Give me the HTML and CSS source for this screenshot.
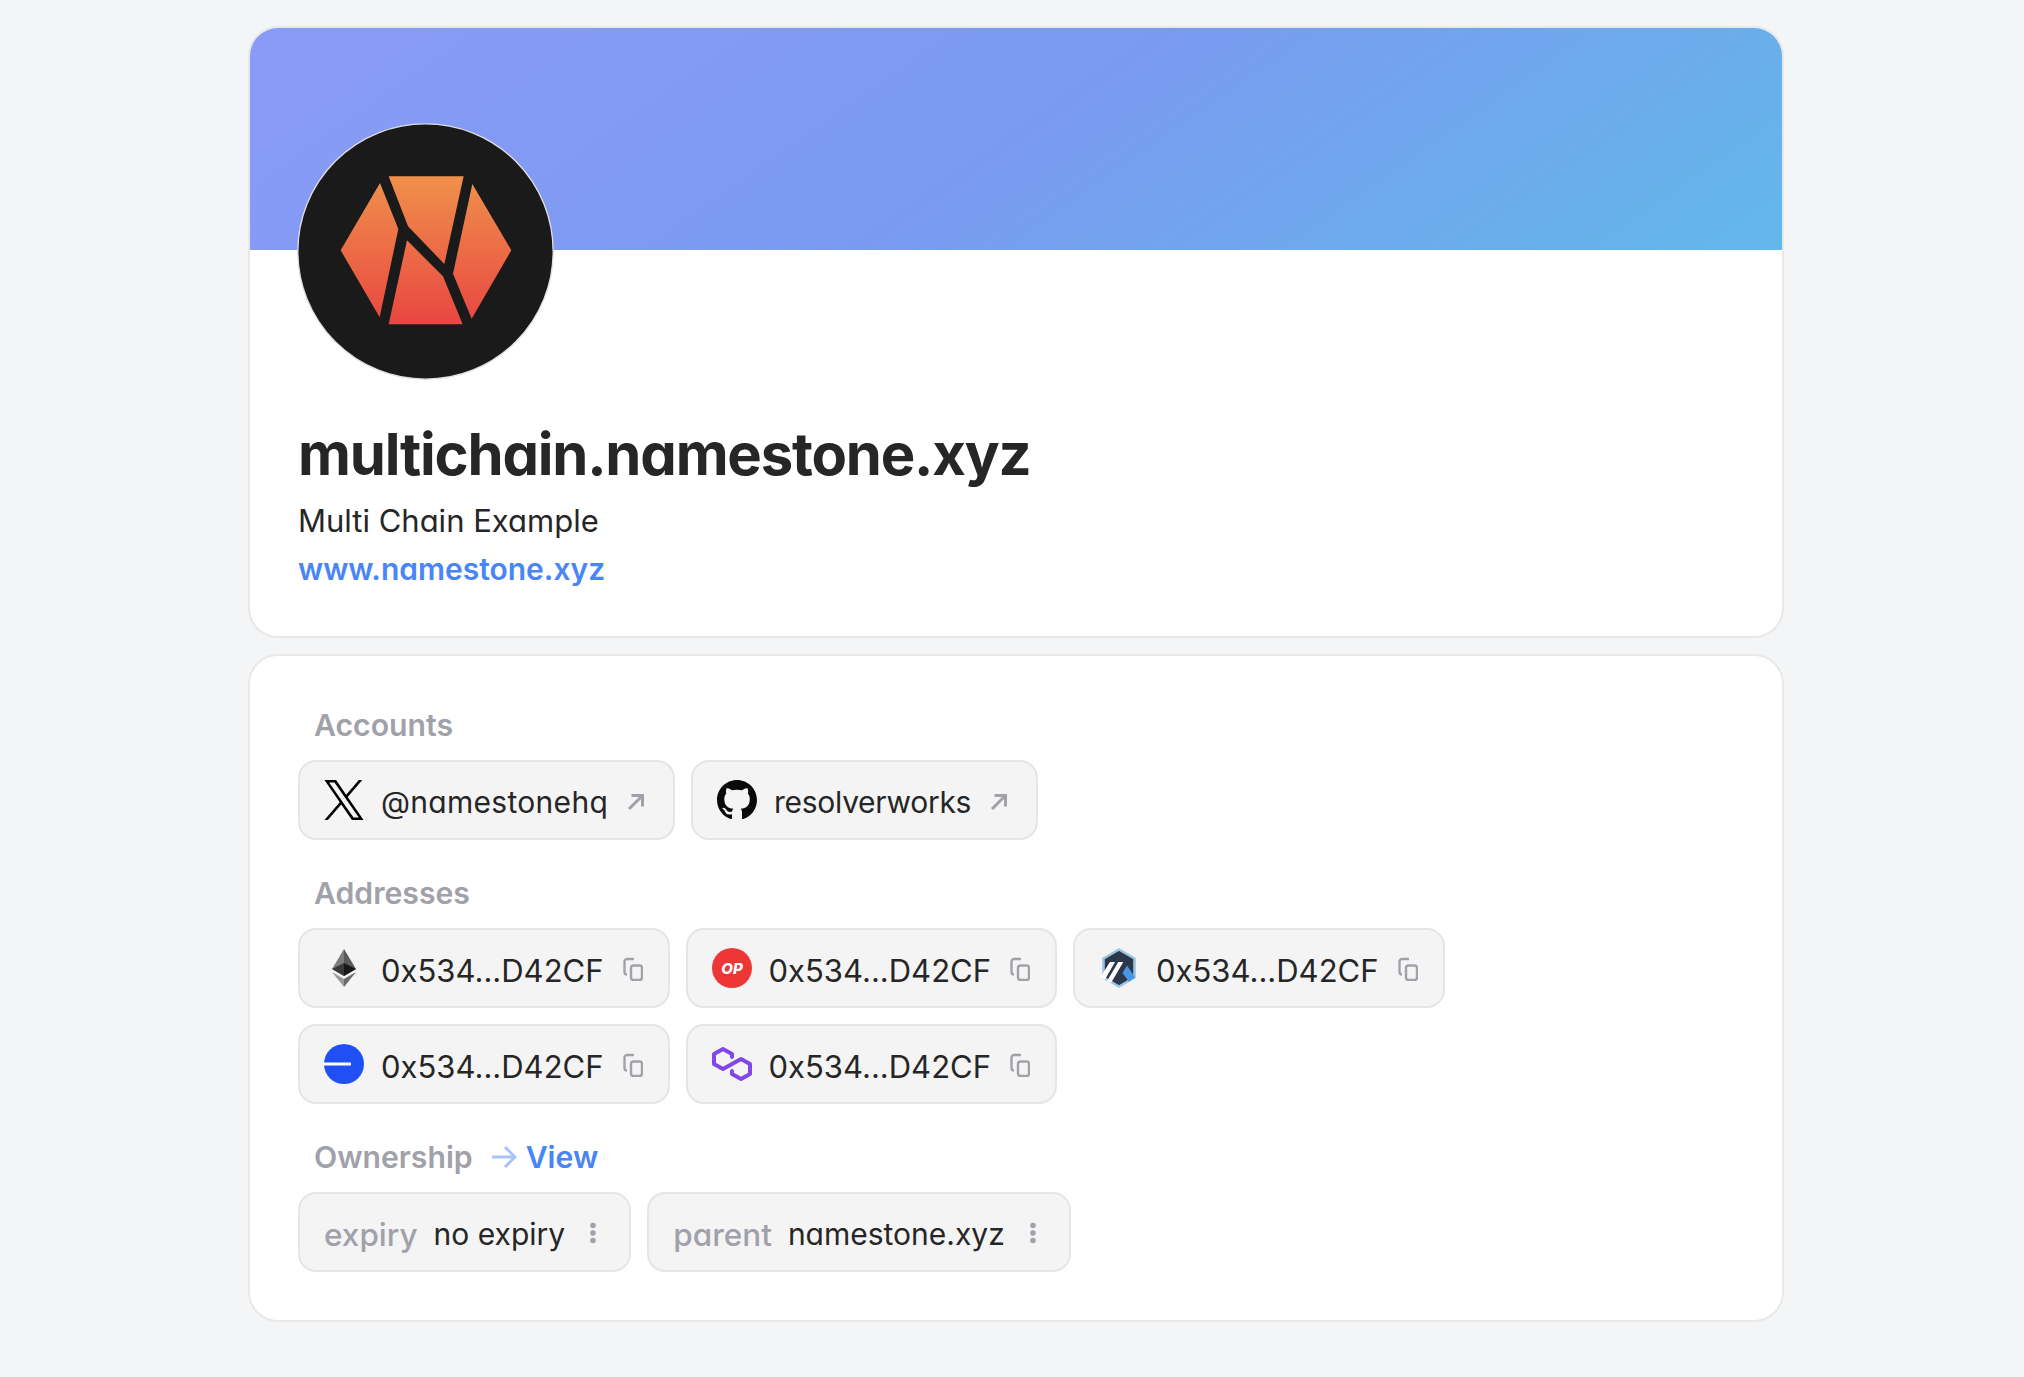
FILE: index.html
```html
<!DOCTYPE html>
<html lang="en">
  <head>
    <meta charset="UTF-8" />
    <title>multichain.namestone.xyz</title>
    <link rel="stylesheet" href="styles.css">
  </head>
  <body>
    <svg class="defs" width="0" height="0">
      <symbol id="copy" viewBox="0 0 20 24">
        <path d="M11 2H4a2.500 2.500 0 0 0-2.500 2.500V15A2.500 2.500 0 0 0 4 17.500" fill="none" stroke="currentColor" stroke-width="2.400"/>
        <rect x="8" y="8.500" width="11" height="14.500" rx="2.500" fill="none" stroke="currentColor" stroke-width="2.400"/>
      </symbol>
      <symbol id="out" viewBox="0 0 18 18">
        <path d="M2 16 15.500 2.500M4.500 2.500h11v11" fill="none" stroke="currentColor" stroke-width="3"/>
      </symbol>
      <symbol id="more" viewBox="0 0 8 22">
        <circle cx="4" cy="3.500" r="2.800" fill="currentColor"/>
        <circle cx="4" cy="11" r="2.800" fill="currentColor"/>
        <circle cx="4" cy="18.500" r="2.800" fill="currentColor"/>
      </symbol>
    </svg>

    <main class="page">
      <section class="card">
        <div class="banner"></div>
        <div class="profile">
          <svg class="avatar" viewBox="172 310 771 771">
            <defs>
              <linearGradient id="logo" gradientUnits="userSpaceOnUse" x1="0" y1="470" x2="0" y2="914">
                <stop offset="0" stop-color="#ef914b"/>
                <stop offset="1" stop-color="#e94641"/>
              </linearGradient>
            </defs>
            <circle cx="557.500" cy="695.500" r="383" fill="#1a1a1a" stroke="#dfdfdf" stroke-width="4"/>
            <path fill="url(#logo)" d="M447 470H672L614 733 505 620ZM421 490 476 628 420 893 303 692ZM698 493 815 692 696 897 640 762ZM502 662 610 770 669 914H447Z"/>
          </svg>
          <h1 class="name">multichain.namestone.xyz</h1>
          <p class="desc">Multi Chain Example</p>
          <a class="site" href="#">www.namestone.xyz</a>
        </div>
      </section>

      <section class="card details">
        <h2 class="label">Accounts</h2>
        <div class="chips">
          <div class="chip">
            <svg class="icon" viewBox="0 0 1200 1227"><path fill="#000" d="M714.163 519.284L1160.89 0H1055.03L667.137 450.887L357.328 0H0L468.492 681.821L0 1226.37H105.866L515.491 750.218L842.672 1226.37H1200L714.137 519.284H714.163ZM569.165 687.828L521.697 619.934L144.011 79.6944H306.615L611.412 515.685L658.88 583.579L1055.08 1150.3H892.476L569.165 687.854V687.828Z"/></svg>
            <span class="val wide">@namestonehq</span>
            <svg class="end out"><use href="#out"/></svg>
          </div>
          <div class="chip">
            <svg class="icon" viewBox="0 0 16 16"><path fill="#0a0a0a" d="M8 0C3.58 0 0 3.58 0 8c0 3.54 2.29 6.53 5.47 7.59.4.07.55-.17.55-.38 0-.19-.01-.82-.01-1.49-2.01.37-2.53-.49-2.69-.94-.09-.23-.48-.94-.82-1.13-.28-.15-.68-.52-.01-.53.63-.01 1.08.58 1.23.82.72 1.21 1.87.87 2.33.66.07-.52.28-.87.51-1.07-1.78-.2-3.64-.89-3.64-3.95 0-.87.31-1.59.82-2.15-.08-.2-.36-1.02.08-2.12 0 0 .67-.21 2.2.82.64-.18 1.32-.27 2-.27.68 0 1.36.09 2 .27 1.53-1.04 2.2-.82 2.2-.82.44 1.1.16 1.92.08 2.12.51.56.82 1.27.82 2.15 0 3.07-1.87 3.75-3.65 3.95.29.25.54.73.54 1.48 0 1.07-.01 1.93-.01 2.2 0 .21.15.46.55.38A8.013 8.013 0 0016 8c0-4.42-3.58-8-8-8z"/></svg>
            <span class="val tight">resolverworks</span>
            <svg class="end out"><use href="#out"/></svg>
          </div>
        </div>

        <h2 class="label">Addresses</h2>
        <div class="chips">
          <div class="chip addr">
            <svg class="icon" viewBox="0 0 40 40">
              <path fill="#7d7d7d" d="M20 1 8 21l12 7z"/>
              <path fill="#5a5a5a" d="M20 1l12 20-12 7z"/>
              <path fill="#3a3a3a" d="M8 21l12-6v13z"/>
              <path fill="#191919" d="M32 21l-12-6v13z"/>
              <path fill="#9a9a9a" d="M8 24l12 15v-8z"/>
              <path fill="#6a6a6a" d="M32 24 20 39v-8z"/>
            </svg>
            <span class="val">0x534...D42CF</span>
            <svg class="end copy"><use href="#copy"/></svg>
          </div>
          <div class="chip addr">
            <svg class="icon" viewBox="0 0 40 40">
              <circle cx="20" cy="20" r="20" fill="#ef3636"/>
              <text class="op" x="20" y="25.500" text-anchor="middle">OP</text>
            </svg>
            <span class="val">0x534...D42CF</span>
            <svg class="end copy"><use href="#copy"/></svg>
          </div>
          <div class="chip addr">
            <svg class="icon" viewBox="0 0 40 40">
              <path fill="#2d374b" stroke="#9dc3df" stroke-width="2.600" stroke-linejoin="round" d="M20 1.500 35.500 10.500V29.500L20 38.500 4.500 29.500V10.500Z"/>
              <path fill="#4a96e6" d="M23.500 25 28 17.500 36 29.300 30 33.800Z"/>
              <path fill="#fff" d="M1.500 29 6 31.500 16 14H11ZM8 33 12 35 24.300 14H19.300Z"/>
            </svg>
            <span class="val">0x534...D42CF</span>
            <svg class="end copy"><use href="#copy"/></svg>
          </div>
          <div class="chip addr">
            <svg class="icon" viewBox="0 0 40 40">
              <circle cx="20" cy="20" r="20" fill="#1f50f5"/>
              <rect x="0" y="18.500" width="27" height="3" fill="#fff"/>
            </svg>
            <span class="val">0x534...D42CF</span>
            <svg class="end copy"><use href="#copy"/></svg>
          </div>
          <div class="chip addr">
            <svg class="icon" viewBox="0 0 40 36">
              <path fill="none" stroke="#8247e5" stroke-width="4" stroke-linejoin="round" stroke-linecap="round" d="M20 11V8L11 3 2 8V18L11 23 29 13 38 18V28L29 33 20 28V25"/>
            </svg>
            <span class="val">0x534...D42CF</span>
            <svg class="end copy"><use href="#copy"/></svg>
          </div>
        </div>

        <h2 class="label">
          Ownership
          <svg class="arrow" viewBox="0 0 26 24"><path d="M1 12h23M14 2l10 10-10 10" fill="none" stroke="#a6c4fb" stroke-width="3"/></svg>
          <a class="view" href="#">View</a>
        </h2>
        <div class="chips">
          <div class="chip">
            <span class="key">expiry</span>
            <span class="val">no expiry</span>
            <svg class="end more"><use href="#more"/></svg>
          </div>
          <div class="chip">
            <span class="key">parent</span>
            <span class="val">namestone.xyz</span>
            <svg class="end more"><use href="#more"/></svg>
          </div>
        </div>
      </section>
    </main>
  </body>
</html>
```

FILE: styles.css
```css
* {
  box-sizing: border-box;
}
body {
  margin: 0;
  background: #f4f5f6;
  font-family: Inter, "Noto Sans", sans-serif;
  font-feature-settings: "cv11";
  color: #262626;
}
.defs {
  display: block;
  height: 0;
}
.page {
  width: 1536px;
  margin: 26px 0 0 248px;
  display: flex;
  flex-direction: column;
  gap: 16px;
}
.card {
  background: #fff;
  border: 2px solid #e8e8e8;
  border-radius: 30px;
  overflow: hidden;
}
.banner {
  height: 222px;
  background: linear-gradient(145deg, #8a9bf7 0%, #7a9af0 50%, #62b8ea 100%);
}
.profile {
  padding: 0 48px 47px;
}
.avatar {
  display: block;
  width: 257px;
  height: 257px;
  margin: -127px 0 0 -1px;
}
.name {
  margin: 40px 0 0;
  font-size: 58px;
  line-height: 68px;
  font-weight: 700;
  letter-spacing: -1.2px;
}
.desc {
  margin: 11px 0 0;
  font-size: 31px;
  line-height: 44px;
}
.site {
  display: block;
  margin-top: 6px;
  font-size: 30px;
  line-height: 40px;
  font-weight: 600;
  color: #4a85f7;
  text-decoration: none;
}
.details {
  padding: 47px 48px 48px;
}
.label {
  margin: 31px 0 13px 16px;
  display: flex;
  align-items: center;
  font-size: 30.200px;
  line-height: 44px;
  font-weight: 600;
  color: #a1a1aa;
}
.label:first-child {
  margin-top: 0;
}
.arrow {
  width: 26px;
  height: 24px;
  margin: 0 9px 0 18px;
}
.view {
  color: #4a85f7;
  text-decoration: none;
}
.chips {
  display: flex;
  flex-wrap: wrap;
  gap: 16px;
}
.chip {
  height: 80px;
  padding: 0 24px;
  display: flex;
  align-items: center;
  background: #f4f4f5;
  border: 2px solid #e5e5e5;
  border-radius: 18px;
  font-size: 30px;
}
.addr {
  font-size: 31px;
}
.icon {
  width: 40px;
  height: 40px;
  margin-right: 17px;
  flex-shrink: 0;
}
.val {
  padding-top: 4px;
  white-space: nowrap;
}
.wide {
  letter-spacing: 0.3px;
}
.tight {
  letter-spacing: -0.3px;
}
.end {
  flex-shrink: 0;
  color: #a1a1aa;
}
.copy {
  width: 20px;
  height: 24px;
  margin: 1px 1px 0 19px;
}
.out {
  width: 18px;
  height: 18px;
  margin: 3px 4px 0 19px;
}
.more {
  width: 8px;
  height: 22px;
  margin: 2px 8px 0 24px;
}
.key {
  margin-right: 16px;
  padding-top: 4px;
  font-size: 31.500px;
  font-weight: 500;
  color: #a1a1aa;
}
.op {
  font-family: Inter, sans-serif;
  font-size: 15px;
  font-weight: 800;
  font-style: italic;
  fill: #fff;
}
```
